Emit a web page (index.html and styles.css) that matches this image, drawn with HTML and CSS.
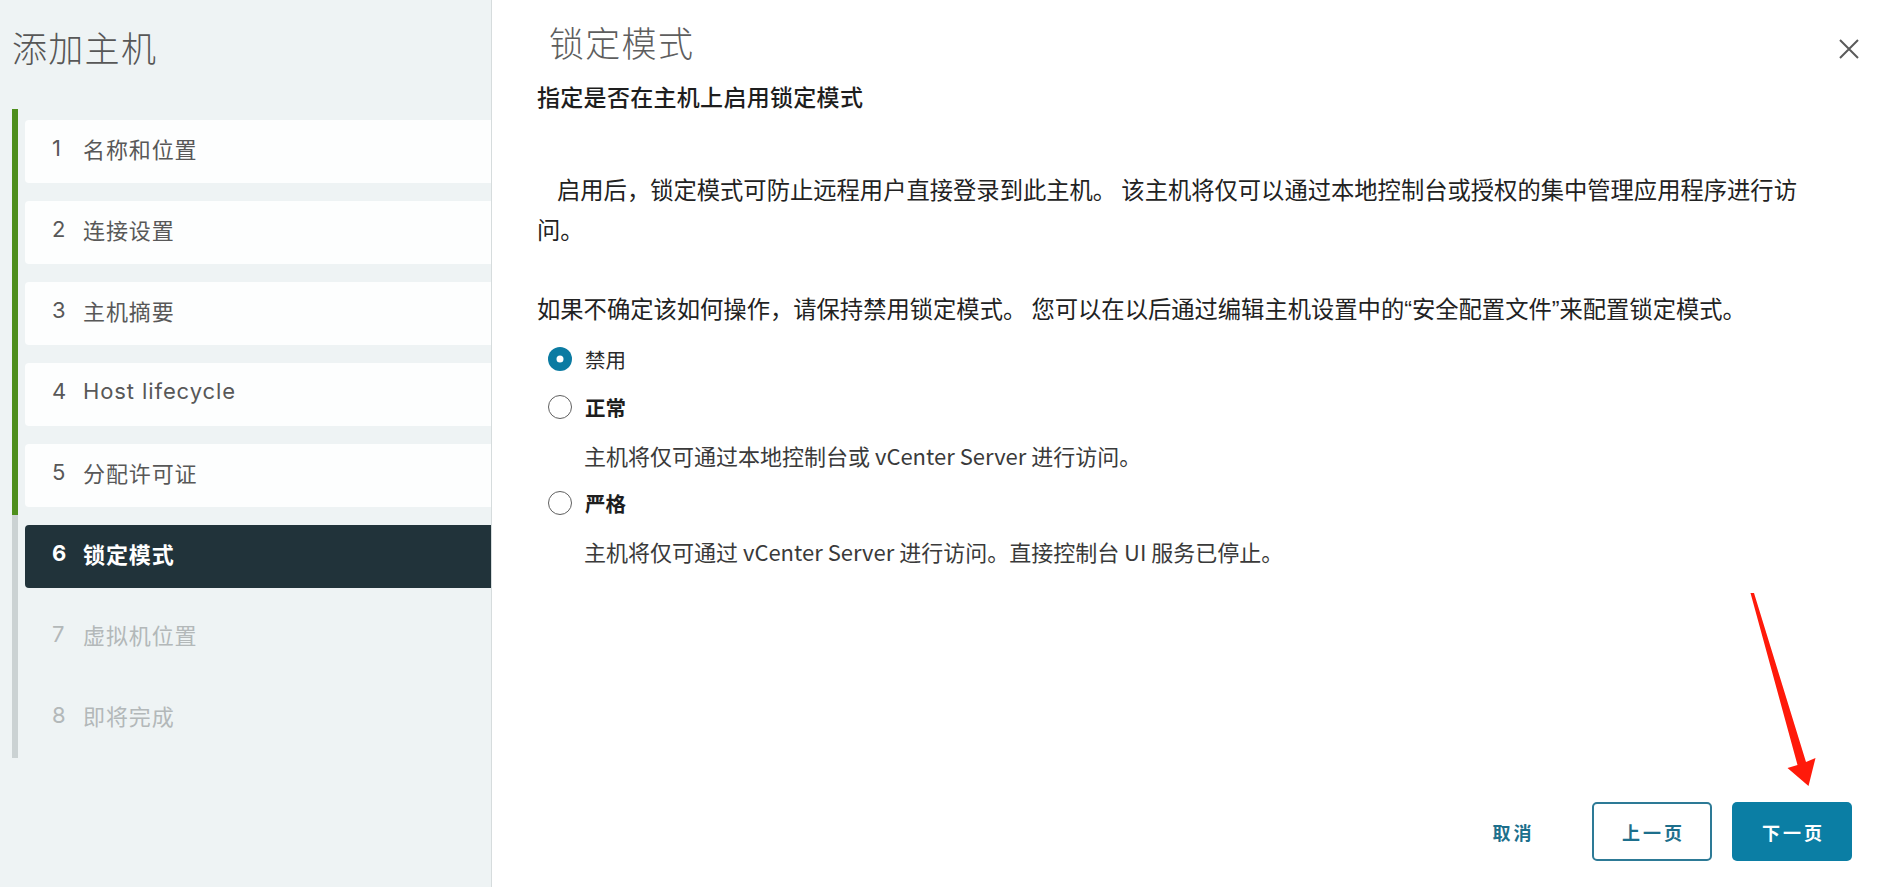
FILE: index.html
```html
<!DOCTYPE html>
<html lang="zh-CN">
<head>
<meta charset="utf-8">
<title>添加主机</title>
<link rel="stylesheet" href="styles.css">
</head>
<body>
<div class="wizard">
  <aside class="sidebar">
    <h1 class="sidebar-title">添加主机</h1>
    <div class="steps-wrap">
      <div class="progress-bar"></div>
      <ol class="steps">
        <li class="step done"><span class="num">1</span><span class="label">名称和位置</span></li>
        <li class="step done"><span class="num">2</span><span class="label">连接设置</span></li>
        <li class="step done"><span class="num">3</span><span class="label">主机摘要</span></li>
        <li class="step done"><span class="num">4</span><span class="label">Host lifecycle</span></li>
        <li class="step done"><span class="num">5</span><span class="label">分配许可证</span></li>
        <li class="step current"><span class="num">6</span><span class="label">锁定模式</span></li>
        <li class="step todo"><span class="num">7</span><span class="label">虚拟机位置</span></li>
        <li class="step todo"><span class="num">8</span><span class="label">即将完成</span></li>
      </ol>
    </div>
  </aside>
  <main class="main">
    <header class="main-header">
      <h2 class="main-title">锁定模式</h2>
      <button class="close-btn" aria-label="关闭">
        <svg width="22" height="22" viewBox="0 0 22 22"><path d="M2 2 L20 20 M20 2 L2 20" stroke="#5a5a5a" stroke-width="2" fill="none"/></svg>
      </button>
    </header>
    <section class="content">
      <p class="subtitle">指定是否在主机上启用锁定模式</p>
      <p class="para first">启用后，锁定模式可防止远程用户直接登录到此主机。 该主机将仅可以通过本地控制台或授权的集中管理应用程序进行访问。</p>
      <p class="para second">如果不确定该如何操作，请保持禁用锁定模式。 您可以在以后通过编辑主机设置中的<span class="q">“</span>安全配置文件<span class="q">”</span>来配置锁定模式。</p>
      <div class="radio-group">
        <div class="radio-row"><span class="radio checked"></span><span class="radio-label">禁用</span></div>
        <div class="radio-row"><span class="radio"></span><span class="radio-label strong">正常</span></div>
        <div class="radio-desc">主机将仅可通过本地控制台或 vCenter Server 进行访问。</div>
        <div class="radio-row"><span class="radio"></span><span class="radio-label strong">严格</span></div>
        <div class="radio-desc">主机将仅可通过 vCenter Server 进行访问。直接控制台 UI 服务已停止。</div>
      </div>
    </section>
    <footer class="footer">
      <button class="btn btn-link">取消</button>
      <button class="btn btn-outline">上一页</button>
      <button class="btn btn-primary">下一页</button>
    </footer>
  </main>
</div>
<svg class="annotation" width="1885" height="887" viewBox="0 0 1885 887">
  <polygon points="1750.5,593 1754,593 1806,762 1815.5,758 1808.5,786 1787.5,768 1797.5,765" fill="#ff1a0a"/>
</svg>
</body>
</html>
```

FILE: styles.css
```css
* { box-sizing: border-box; }
html, body { margin: 0; padding: 0; }
body {
  width: 1885px;
  height: 887px;
  overflow: hidden;
  background: #ffffff;
  font-family: "Noto Sans CJK SC", "Noto Sans", sans-serif;
  color: #222;
}
.wizard {
  display: flex;
  height: 887px;
}
.sidebar {
  width: 492px;
  flex: none;
  background: #eef3f4;
  border-right: 1px solid #d6dcdd;
}
.sidebar-title {
  margin: 0;
  padding: 22px 0 0 12px;
  font-size: 35px;
  line-height: 50px;
  font-weight: 300;
  color: #575757;
  letter-spacing: 1.3px;
}
.steps-wrap {
  display: flex;
  margin-top: 37px;
}
.progress-bar {
  width: 6px;
  margin-left: 12px;
  margin-right: 7px;
  background: linear-gradient(#4e8f1c 0, #4e8f1c 406px, #cbd2d3 406px);
}
.steps {
  list-style: none;
  margin: 0;
  padding: 11px 0 8px 0;
  flex: 1;
  display: flex;
  flex-direction: column;
  gap: 18px;
}
.step {
  height: 63px;
  display: flex;
  align-items: center;
  padding: 0 0 7px 27px;
  font-family: "Inter", "Noto Sans CJK SC", sans-serif;
  font-size: 22px;
  letter-spacing: 0.9px;
  border-radius: 4px 0 0 4px;
}
.step .num { width: 31px; flex: none; }
.step.done { background: #fdfefe; color: #585858; }
.step.current { background: #21333a; color: #ffffff; font-weight: 700; }
.step.todo { color: #b3b8b9; }

.main {
  flex: 1;
  display: flex;
  flex-direction: column;
  padding-left: 45px;
}
.main-header {
  display: flex;
  justify-content: space-between;
  align-items: flex-start;
}
.main-title {
  margin: 0;
  padding: 17px 0 0 12px;
  font-size: 35px;
  line-height: 50px;
  font-weight: 300;
  color: #5e5e5e;
  letter-spacing: 1.3px;
}
.close-btn {
  margin: 38px 25px 0 0;
  padding: 0;
  width: 22px;
  height: 22px;
  border: 0;
  background: none;
  display: flex;
}
.content {
  flex: 1;
  padding-right: 62px;
}
.subtitle {
  margin: 13px 0 0 0;
  font-size: 23px;
  line-height: 32px;
  font-weight: 500;
  letter-spacing: 0.3px;
  color: #1e1e1e;
}
.para {
  margin: 0;
  font-size: 23.3px;
  line-height: 40px;
  color: #222;
}
.para.first { margin-top: 57px; text-indent: 20px; }
.para.second { margin-top: 39px; }
.q { font-family: "Liberation Sans", sans-serif; }
.radio-group {
  margin-top: 5px;
  display: flex;
  flex-direction: column;
}
.radio-row {
  height: 48px;
  display: flex;
  align-items: center;
  padding-left: 11px;
}
.radio {
  width: 24px;
  height: 24px;
  border-radius: 50%;
  border: 1.5px solid #5f5f5f;
  background: #fff;
  flex: none;
  margin-right: 13px;
}
.radio.checked {
  border: 0;
  box-shadow: inset 0 0 0 8.5px #0b7ba2;
}
.radio-label {
  font-size: 20.5px;
  color: #2a2a2a;
}
.radio-label.strong { font-weight: 700; color: #1e1e1e; }
.radio-desc {
  height: 48px;
  display: flex;
  align-items: center;
  padding-left: 47px;
  font-size: 22px;
  color: #3a3a3a;
}
.footer {
  display: flex;
  justify-content: flex-end;
  gap: 20px;
  padding: 0 33px 26px 0;
}
.btn {
  width: 120px;
  height: 59px;
  border-radius: 5px;
  font-family: "Noto Sans CJK SC", sans-serif;
  font-size: 18px;
  font-weight: 700;
  letter-spacing: 3px;
  padding: 0 0 0 3px;
  cursor: pointer;
}
.btn-link {
  border: 0;
  background: none;
  color: #1d6f8c;
}
.btn-outline {
  border: 2px solid #2d7a96;
  background: #fff;
  color: #1d6f8c;
}
.btn-primary {
  border: 0;
  background: #0b7ea4;
  color: #fff;
}
.annotation {
  position: fixed;
  left: 0;
  top: 0;
  pointer-events: none;
}
```
